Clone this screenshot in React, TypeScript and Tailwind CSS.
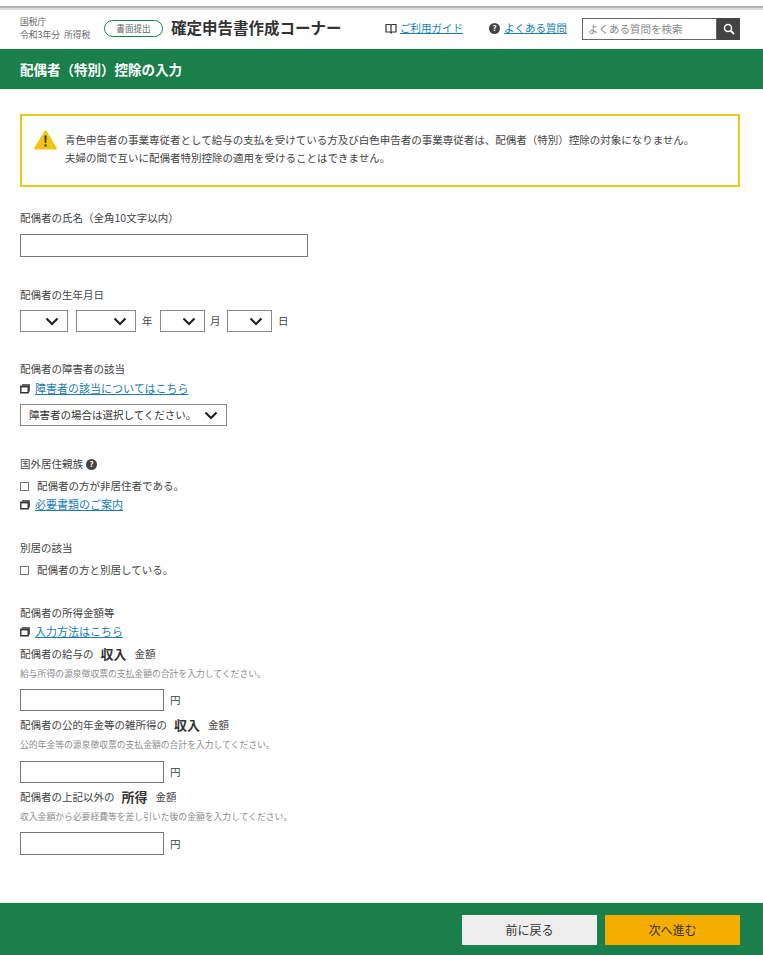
import type { ReactNode } from "react";

const FONT = "font-['Noto_Sans_CJK_JP','Noto_Sans',sans-serif]";

function WindowIcon() {
  return (
    <svg width="10" height="10" viewBox="0 0 10 10" className="mr-[5px] mt-[1px] shrink-0">
      <path d="M0.8 2.2h7.4v6.6H0.8z" fill="none" stroke="#333" strokeWidth="1.4" />
      <path d="M2 0.8h7.2v6.6" fill="none" stroke="#333" strokeWidth="1.2" />
      <path d="M0.5 2h8v1.4h-8z" fill="#333" />
    </svg>
  );
}

function Chevron() {
  return (
    <svg width="14" height="9" viewBox="0 0 14 9" className="pointer-events-none absolute right-[9px] top-[7px]">
      <path d="M1.5 1.5L7 7l5.5-5.5" fill="none" stroke="#222" strokeWidth="2.2" />
    </svg>
  );
}

function HelpDot({ size = "w-[11px] h-[11px]" }: { size?: string }) {
  return (
    <span className={`${size} inline-flex shrink-0 items-center justify-center rounded-full bg-[#444] text-[8px] font-bold leading-none text-white`}>
      ?
    </span>
  );
}

function Label({ className = "", children }: { className?: string; children: ReactNode }) {
  return <div className={`flex h-5 items-center leading-5 ${className}`}>{children}</div>;
}

function DocLink({ className = "", children }: { className?: string; children: ReactNode }) {
  return (
    <div className={`flex h-5 items-center pb-[2px] ${className}`}>
      <WindowIcon />
      <a href="#" className="text-[11px] text-[#1b7eb3] underline">{children}</a>
    </div>
  );
}

function Select({ width, text, className = "" }: { width: string; text?: string; className?: string }) {
  return (
    <div className={`relative shrink-0 ${width} ${className}`}>
      <select className="h-full w-full appearance-none rounded-none border border-[#8a8a8a] bg-white pl-[8px] text-[10.5px] text-[#333] outline-none">
        {text ? <option>{text}</option> : <option></option>}
      </select>
      <Chevron />
    </div>
  );
}

function Check({ children, className = "" }: { children: ReactNode; className?: string }) {
  return (
    <label className={`flex h-5 items-center ${className}`}>
      <input type="checkbox" className="h-[9px] w-[9px] shrink-0 appearance-none border border-[#777] bg-white" />
      <span className="ml-[8px]">{children}</span>
    </label>
  );
}

function Amount({ lead, strong, hint, className, inputClass }: { lead: string; strong: string; hint: string; className: string; inputClass: string }) {
  return (
    <div className={className}>
      <div className="flex h-5 items-center">
        <span>{lead}</span>
        <strong className="ml-[7px] mr-[8px] text-[13px] font-bold text-[#333]">{strong}</strong>
        <span>金額</span>
      </div>
      <div className="flex h-5 items-center text-[8.8px] text-[#8b8b8b]">{hint}</div>
      <div className={`flex items-center ${inputClass}`}>
        <input className="h-full w-[144px] border border-[#777] bg-white outline-none" />
        <span className="ml-[6px]">円</span>
      </div>
    </div>
  );
}

export default function App() {
  return (
    <div className={`${FONT} flex h-[955px] w-full flex-col overflow-hidden bg-white text-[10.5px] text-[#444]`}>
      <div className="h-[6px]" />
      <div className="h-[2px] bg-[#b4b4b4]" />
      <div className="h-[2px] bg-[#dcdcdc]" />

      <header className="flex h-[39px] items-center pb-[3px] pl-[20px]">
        <div className="w-[84px] text-[8.8px] leading-[13px] text-[#666]">
          <div>国税庁</div>
          <div>令和3年分&nbsp;&nbsp;所得税</div>
        </div>
        <span className="flex h-[17px] w-[59px] items-center justify-center rounded-full border border-[#1a7f4b] text-[8.6px] text-[#666]">
          書面提出
        </span>
        <h1 className="ml-[8px] w-[214px] text-[15.5px] font-bold leading-none tracking-normal text-[#333]">
          確定申告書作成コーナー
        </h1>
        <svg width="12" height="11" viewBox="0 0 12 11" className="shrink-0">
          <path d="M1 1.5h4.2L6 2.5l.8-1H11v7.5H6.8L6 10l-.8-1H1zM6 2.5V10" fill="none" stroke="#333" strokeWidth="1.2" />
        </svg>
        <a href="#" className="ml-[3px] w-[89px] text-[10.5px] text-[#1b7eb3] underline">ご利用ガイド</a>
        <HelpDot />
        <a href="#" className="ml-[4px] w-[78px] text-[10.5px] text-[#1b7eb3] underline">よくある質問</a>
        <div className="mt-[2px] flex h-[22px] w-[158px]">
          <input
            placeholder="よくある質問を検索"
            className="h-full w-[135px] border border-[#666] pb-[2px] pl-[5px] text-[10.5px] outline-none placeholder:text-[#888]"
          />
          <button className="flex h-full w-[23px] items-center justify-center bg-[#444]">
            <svg width="12" height="12" viewBox="0 0 12 12">
              <circle cx="5" cy="5" r="3.5" fill="none" stroke="#fff" strokeWidth="1.5" />
              <path d="M7.5 7.5L11 11" stroke="#fff" strokeWidth="1.8" />
            </svg>
          </button>
        </div>
      </header>

      <div className="flex h-[40px] items-center bg-[#1a7f4b] pl-[20px] text-[13.5px] font-bold text-white">
        配偶者（特別）控除の入力
      </div>

      <main className="flex-1 pl-[20px] pr-[23px]">
        <div className="mt-[25px] flex h-[73px] items-start border-2 border-[#e9c81d] pl-[12px] pt-[14px]">
          <svg width="23" height="20" viewBox="0 0 23 20" className="shrink-0">
            <path d="M11.5 1.5L21.8 18.5H1.2z" fill="#f1c40f" stroke="#f1c40f" strokeWidth="2.2" strokeLinejoin="round" />
            <path d="M10.4 5.5h2.2l-.4 7.5h-1.4z" fill="#333" />
            <rect x="10.5" y="14.5" width="2" height="2" fill="#333" />
          </svg>
          <div className="ml-[8px] mt-px leading-[18px]">
            <p>青色申告者の事業専従者として給与の支払を受けている方及び白色申告者の事業専従者は、配偶者（特別）控除の対象になりません。</p>
            <p>夫婦の間で互いに配偶者特別控除の適用を受けることはできません。</p>
          </div>
        </div>

        <Label className="mt-[21px]">配偶者の氏名（全角10文字以内）</Label>
        <input className="mt-[6px] block h-[23px] w-[288px] border border-[#777] bg-white outline-none" />

        <Label className="mt-[28px]">配偶者の生年月日</Label>
        <div className="mt-[5px] flex h-[22px] items-center">
          <Select width="w-[48px] h-full" />
          <Select width="w-[60px] h-full" className="ml-[8px]" />
          <span className="ml-[6px] w-[18px]">年</span>
          <Select width="w-[45px] h-full" />
          <span className="ml-[5px] w-[17px]">月</span>
          <Select width="w-[45px] h-full" />
          <span className="ml-[6px]">日</span>
        </div>

        <Label className="mt-[27px]">配偶者の障害者の該当</Label>
        <DocLink>障害者の該当についてはこちら</DocLink>
        <Select width="w-[207px] h-[22px]" text="障害者の場合は選択してください。" className="mt-[5px]" />

        <Label className="mt-[28px]">
          国外居住親族
          <span className="ml-[3px] flex"><HelpDot /></span>
        </Label>
        <Check className="mt-[2px]">配偶者の方が非居住者である。</Check>
        <DocLink className="-mt-px">必要書類のご案内</DocLink>

        <Label className="mt-[23px]">別居の該当</Label>
        <Check className="mt-[2px]">配偶者の方と別居している。</Check>

        <Label className="mt-[23px]">配偶者の所得金額等</Label>
        <DocLink className="-mt-px">入力方法はこちら</DocLink>

        <Amount
          className="mt-[2px]"
          lead="配偶者の給与の"
          strong="収入"
          hint="給与所得の源泉徴収票の支払金額の合計を入力してください。"
          inputClass="mt-[5px] h-[22px]"
        />
        <Amount
          className="mt-[4px]"
          lead="配偶者の公的年金等の雑所得の"
          strong="収入"
          hint="公的年金等の源泉徴収票の支払金額の合計を入力してください。"
          inputClass="mt-[6px] h-[22px]"
        />
        <Amount
          className="mt-[4px]"
          lead="配偶者の上記以外の"
          strong="所得"
          hint="収入金額から必要経費等を差し引いた後の金額を入力してください。"
          inputClass="mt-[5px] h-[23px]"
        />
      </main>

      <footer className="flex h-[52px] items-start justify-end gap-[8px] bg-[#1a7f4b] pr-[23px] pt-[12px]">
        <button className="h-[30px] w-[135px] bg-[#eeeeee] text-[12px] text-[#333]">前に戻る</button>
        <button className="h-[30px] w-[135px] bg-[#f5ad00] text-[12px] text-[#333]">次へ進む</button>
      </footer>
    </div>
  );
}
